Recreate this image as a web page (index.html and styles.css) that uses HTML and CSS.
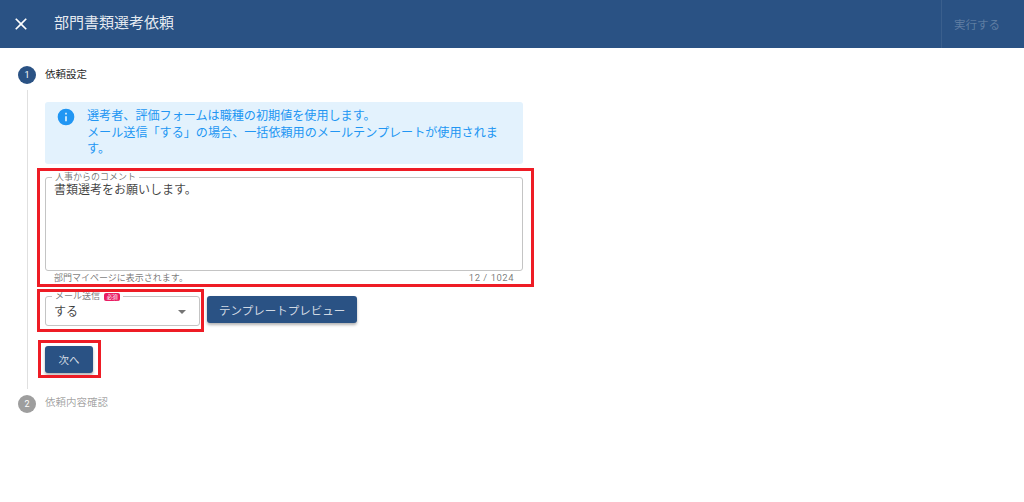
FILE: index.html
```html
<!DOCTYPE html>
<html lang="ja">
<head>
    <meta charset="UTF-8">
    <meta name="viewport" content="width=device-width, initial-scale=1.0">
    <title>部門書類選考依頼</title>
    <link rel="stylesheet" href="styles.css">
</head>
<body>

<!-- Header -->
<header class="toolbar">
    <button class="close-button" aria-label="閉じる">
        <svg viewBox="0 0 24 24" width="20" height="20"><path fill="#fff" d="M19 6.41 17.59 5 12 10.59 6.41 5 5 6.41 10.59 12 5 17.59 6.41 19 12 13.41 17.59 19 19 17.59 13.41 12z"/></svg>
    </button>
    <div class="toolbar-title">部門書類選考依頼</div>
    <button class="run-button" disabled>実行する</button>
</header>

<main class="stepper">
    <!-- Step 1 -->
    <div class="step-head">
        <span class="step-number">1</span>
        <span class="step-label">依頼設定</span>
    </div>
    <div class="step-content">
        <div class="alert">
            <svg class="alert-icon" viewBox="0 0 24 24" width="20" height="20"><path fill="#2196f3" d="M12 2a10 10 0 1 0 0 20 10 10 0 0 0 0-20zm1 15h-2v-6h2zm0-8h-2V7h2z"/></svg>
            <p class="alert-text">選考者、評価フォームは職種の初期値を使用します。<br>メール送信「する」の場合、一括依頼用のメールテンプレートが使用されます。</p>
        </div>

        <div class="comment-wrap">
            <div class="comment-box">
                <span class="legend">人事からのコメント</span>
                <div class="comment-text">書類選考をお願いします。</div>
            </div>
            <div class="hint-row">
                <span>部門マイページに表示されます。</span>
                <span class="counter">12 / 1024</span>
            </div>
            <span class="mark mark-comment"></span>
        </div>

        <div class="mail-row">
            <div class="select-wrap">
                <div class="select-box">
                    <span class="legend">メール送信 <span class="required">必須</span></span>
                    <span class="select-value">する</span>
                    <span class="select-arrow"></span>
                </div>
                <span class="mark mark-select"></span>
            </div>
            <button class="btn">テンプレートプレビュー</button>
        </div>

        <div class="next-wrap">
            <button class="btn btn-next">次へ</button>
            <span class="mark mark-next"></span>
        </div>
    </div>

    <!-- Step 2 -->
    <div class="step-head">
        <span class="step-number inactive">2</span>
        <span class="step-label inactive">依頼内容確認</span>
    </div>
</main>

</body>
</html>
```

FILE: styles.css
```css
body {
    margin: 0;
    height: 502px;
    overflow: hidden;
    background-color: white;
    font-family: 'Roboto', 'Noto Sans CJK JP', sans-serif;
    color: rgba(0, 0, 0, 0.87);
}
button {
    font-family: inherit;
    border: none;
}
.toolbar {
    display: flex;
    align-items: center;
    height: 48px;
    background-color: #2a5284;
    color: white;
}
.close-button {
    display: flex;
    width: 42px;
    justify-content: center;
    padding: 0;
    background: transparent;
}
.toolbar-title {
    flex: 1;
    margin-left: 12px;
    font-size: 15px;
    line-height: 20px;
    margin-top: -3px;
    color: rgba(255, 255, 255, 0.9);
}
.run-button {
    width: 83px;
    height: 48px;
    padding: 0 0 0 12px;
    text-align: left;
    font-size: 11.5px;
    color: rgba(255, 255, 255, 0.25);
    background: transparent;
    border-left: 1px solid rgba(255, 255, 255, 0.08);
}
.stepper {
    padding: 18px 0 0 18px;
}
.step-head {
    display: flex;
    align-items: center;
    height: 18px;
    gap: 9px;
}
.step-number {
    width: 18px;
    height: 18px;
    border-radius: 50%;
    background-color: #2a5284;
    color: white;
    font-size: 9px;
    line-height: 18px;
    text-align: center;
}
.step-number.inactive {
    background-color: #9e9e9e;
}
.step-label {
    font-size: 10.5px;
    line-height: 14px;
    margin-top: -1px;
}
.step-label.inactive {
    color: rgba(0, 0, 0, 0.38);
    margin-top: -2px;
}
.step-content {
    width: 478px;
    margin: 6px 0 6px 9px;
    padding: 12px 0 16px 17px;
    border-left: 1px solid #e0e0e0;
}
.alert {
    display: flex;
    height: 62px;
    box-sizing: border-box;
    padding: 6px 20px 0 11px;
    gap: 11px;
    border-radius: 3px;
    background-color: #e3f2fd;
    color: #2196f3;
}
.alert-icon {
    flex-shrink: 0;
    margin-top: -1px;
}
.alert-text {
    margin: 0;
    font-size: 12.1px;
    line-height: 16.5px;
}
.mark {
    position: absolute;
    border: 3px solid #ee1c25;
    pointer-events: none;
}
.mark-comment {
    top: -9px;
    left: -8px;
    right: -11px;
    bottom: -3px;
}
.mark-select {
    top: -7px;
    left: -8px;
    right: -4px;
    bottom: -6px;
}
.mark-next {
    top: -6px;
    left: -7px;
    right: -8px;
    bottom: -5px;
}
.comment-wrap {
    position: relative;
    margin-top: 13px;
}
.comment-box {
    position: relative;
    height: 94px;
    box-sizing: border-box;
    padding: 5px 8px;
    border: 1px solid #c4c4c4;
    border-radius: 3px;
}
.legend {
    position: absolute;
    top: -6px;
    left: 6px;
    padding: 0 3px;
    background-color: white;
    font-size: 9px;
    line-height: 11px;
    color: rgba(0, 0, 0, 0.55);
    white-space: nowrap;
}
.comment-text {
    font-size: 12px;
    line-height: 15px;
    color: rgba(0, 0, 0, 0.75);
}
.hint-row {
    display: flex;
    justify-content: space-between;
    padding: 1px 9px 0 9px;
    height: 12px;
    font-size: 9px;
    line-height: 12px;
    color: rgba(0, 0, 0, 0.55);
}
.counter {
    font-size: 9.5px;
    letter-spacing: 0.5px;
}
.mail-row {
    display: flex;
    align-items: flex-start;
    gap: 7px;
    margin-top: 12px;
}
.select-wrap {
    position: relative;
}
.select-box {
    position: relative;
    display: flex;
    align-items: center;
    width: 155px;
    height: 30px;
    box-sizing: border-box;
    padding: 0 8px;
    border: 1px solid #c4c4c4;
    border-radius: 3px;
}
.select-value {
    font-size: 12px;
    margin-top: -1px;
    color: rgba(0, 0, 0, 0.75);
}
.select-arrow {
    position: absolute;
    right: 13px;
    top: 13px;
    border-left: 4px solid transparent;
    border-right: 4px solid transparent;
    border-top: 4px solid #757575;
}
.required {
    display: inline-block;
    padding: 0 2.5px;
    margin-left: 2px;
    border-radius: 2px;
    background-color: #e91e63;
    color: white;
    font-size: 5.5px;
    line-height: 8px;
    vertical-align: 0;
}
.btn {
    height: 27px;
    padding: 0 12px;
    border-radius: 3px;
    background-color: #2a5284;
    color: rgba(255, 255, 255, 0.8);
    font-size: 11.5px;
    box-shadow: 0 2px 3px rgba(0, 0, 0, 0.3);
}
.next-wrap {
    position: relative;
    width: fit-content;
    margin-top: 20px;
}
.btn-next {
    display: block;
    width: 48px;
    padding: 0;
    font-size: 10.5px;
}
```
